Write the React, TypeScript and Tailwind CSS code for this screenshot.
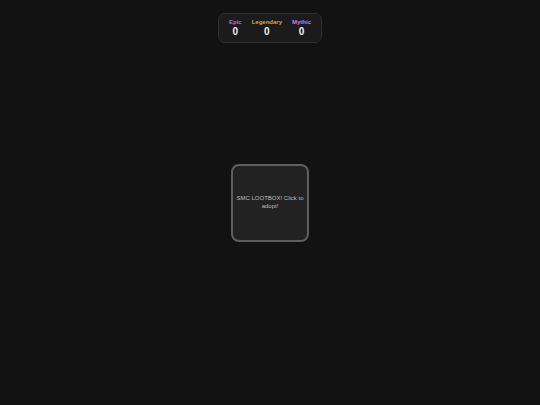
import React from 'react';

const stats = [
  { label: 'Epic', value: 0, color: 'text-[#a66de6]' },
  { label: 'Legendary', value: 0, color: 'text-[#e0a32e]' },
  { label: 'Mythic', value: 0, color: 'text-[#c67cf0]' },
];

const App: React.FC = () => {
  return (
    <div className="relative min-h-screen bg-[#121212] flex items-center justify-center font-['Liberation_Sans',Arial,sans-serif]">
      <div className="absolute top-[13px] left-1/2 -translate-x-1/2 flex gap-[10px] px-[10px] py-[5px] rounded-[7px] bg-[#1b1b1b] border border-[#2f2f2f]">
        {stats.map((s) => (
          <div key={s.label} className="flex flex-col items-center">
            <span className={`text-[6px] font-bold leading-[7px] ${s.color}`}>{s.label}</span>
            <span className="text-[10px] font-bold leading-[11px] text-[#f0f0f0]">{s.value}</span>
          </div>
        ))}
      </div>

      <button className="w-[78px] h-[78px] rounded-[8px] border-2 border-[#5e5e5e] bg-[#222222] flex items-center justify-center px-[2px] text-center text-[6px] leading-[7.5px] text-[#bdbdbd] cursor-pointer">
        SMC LOOTBOX! Click to adopt!
      </button>
    </div>
  );
};

export default App;
